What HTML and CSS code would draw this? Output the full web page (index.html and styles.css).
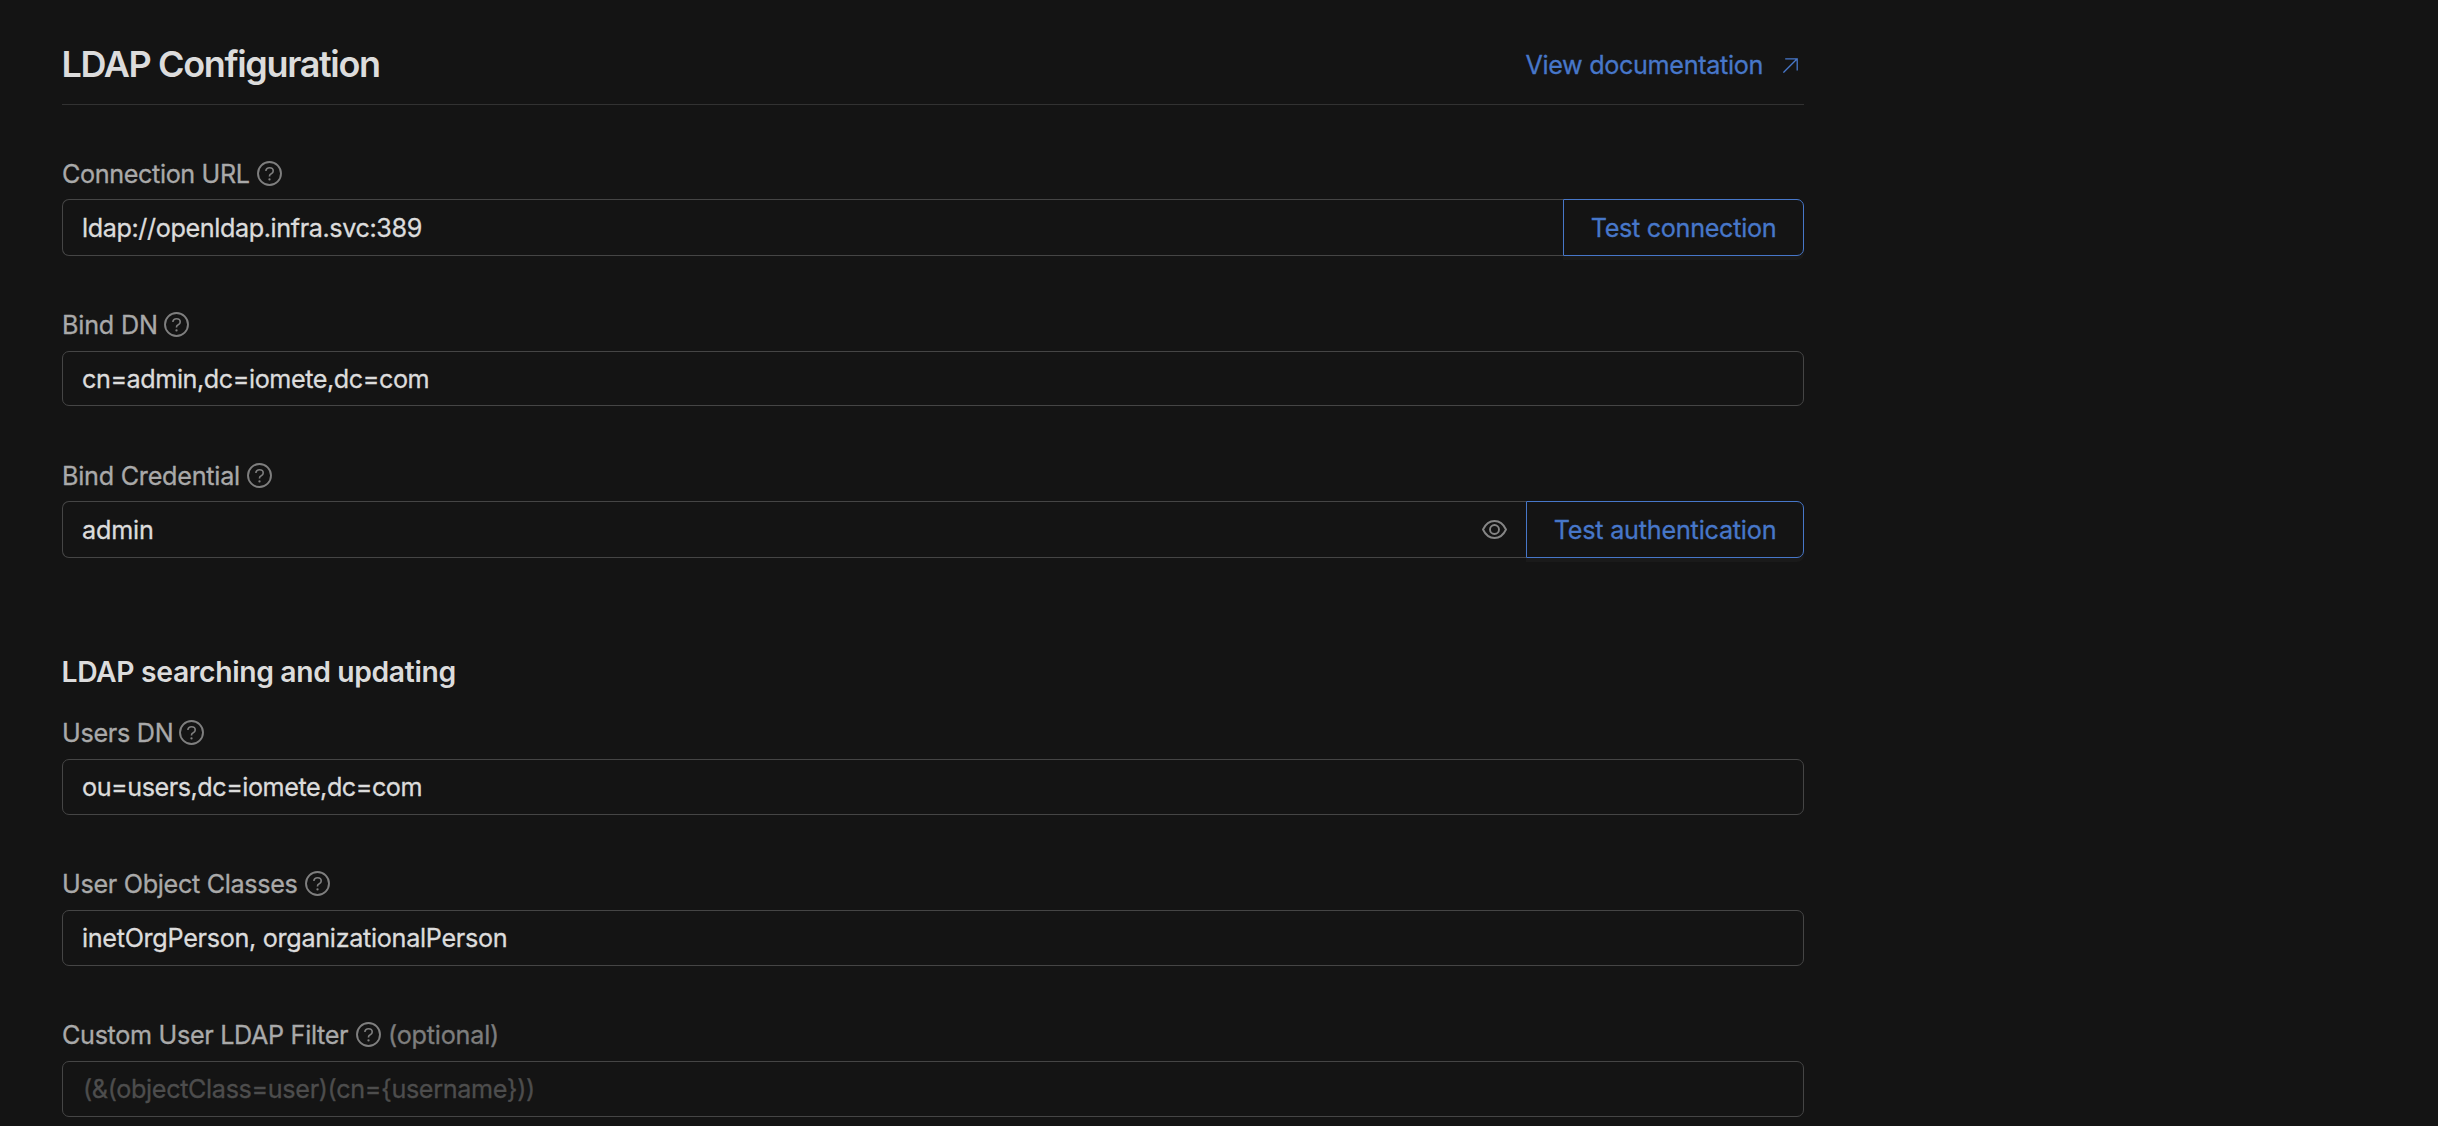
FILE: index.html
```html
<!DOCTYPE html>
<html lang="en">
<head>
<meta charset="utf-8">
<title>LDAP Configuration</title>
<link rel="stylesheet" href="styles.css">
</head>
<body>
<svg class="sprite" aria-hidden="true">
  <symbol id="help" viewBox="0 0 25 25">
    <circle cx="12.5" cy="12.5" r="11.5" fill="none" stroke="currentColor" stroke-width="1.9"/>
    <path d="M8.900 10.100C8.900 7.900 10.400 6.700 12.500 6.700s3.700 1.300 3.700 3.200c0 1.500-.9 2.300-2 2.900-1.200.6-1.700 1.100-1.700 2.100v.6" fill="none" stroke="currentColor" stroke-width="1.6"/>
    <circle cx="12.5" cy="18.4" r="1.15" fill="currentColor"/>
  </symbol>
</svg>
<main class="page">
  <header class="header">
    <h1 class="title">LDAP Configuration</h1>
    <a class="doc-link"><span>View documentation</span>
      <svg class="arrow" viewBox="0 0 15 15"><path d="M.4 14.6L14.2.8M2.2.8h12v11.8" fill="none" stroke="currentColor" stroke-width="1.3"/></svg>
    </a>
  </header>

  <section class="field field--action">
    <label class="label"><span class="t-url">Connection URL</span><svg class="help"><use href="#help"/></svg></label>
    <div class="group">
      <div class="input"><span class="v-url">ldap://openldap.infra.svc:389</span></div>
      <button class="button button--connection">Test connection</button>
    </div>
  </section>

  <section class="field field--compact">
    <label class="label"><span class="t-bind">Bind DN</span><svg class="help"><use href="#help"/></svg></label>
    <div class="input"><span class="v-bind">cn=admin,dc=iomete,dc=com</span></div>
  </section>

  <section class="field field--action">
    <label class="label"><span class="t-cred">Bind Credential</span><svg class="help"><use href="#help"/></svg></label>
    <div class="group">
      <div class="input"><span class="v-cred">admin</span>
        <svg class="eye" viewBox="0 0 25 19" fill="none" stroke="currentColor" stroke-width="1.9"><path d="M1 9.500C3.600 4 7.500 1 12.500 1s8.900 3 11.500 8.500C21.400 15 17.500 18 12.500 18S3.600 15 1 9.500z"/><circle cx="12.500" cy="9.500" r="4.500"/></svg>
      </div>
      <button class="button button--auth">Test authentication</button>
    </div>
  </section>

  <h2 class="subtitle">LDAP searching and updating</h2>

  <section class="field">
    <label class="label"><span class="t-users">Users DN</span><svg class="help"><use href="#help"/></svg></label>
    <div class="input"><span class="v-users">ou=users,dc=iomete,dc=com</span></div>
  </section>

  <section class="field">
    <label class="label"><span class="t-classes">User Object Classes</span><svg class="help"><use href="#help"/></svg></label>
    <div class="input"><span class="v-classes">inetOrgPerson, organizationalPerson</span></div>
  </section>

  <section class="field">
    <label class="label"><span class="t-filter">Custom User LDAP Filter</span><svg class="help"><use href="#help"/></svg><span class="optional">(optional)</span></label>
    <div class="input"><span class="placeholder">(&amp;(objectClass=user)(cn={username}))</span></div>
  </section>
</main>
</body>
</html>
```
FILE: styles.css
```css
* { box-sizing: border-box; }
html { background: #141414; overflow: hidden; }
body {
  margin: 0;
  height: 1126px;
  overflow: hidden;
  background: #141414;
  color: #dcdcdc;
  font: 400 25.2px/40px Inter, "Liberation Sans", sans-serif;
  -webkit-text-stroke: 0.3px currentColor;
  white-space: nowrap;
}
.sprite { display: none; }
.page { width: 1804px; padding: 24px 0 0 62px; }

.header {
  display: flex;
  justify-content: space-between;
  align-items: center;
  height: 81px;
  margin-bottom: 49px;
  border-bottom: 1px solid #323232;
}
.title, .subtitle { font-weight: 600; -webkit-text-stroke-width: 0; }
.title { margin: 0 0 0 -0.5px; font-size: 36px; letter-spacing: -1.37px; }
.doc-link {
  display: flex;
  align-items: center;
  padding: 2px 6px 0 0;
  color: #4777c9;
  letter-spacing: -0.34px;
}
.arrow { width: 15px; height: 15px; margin-left: 20px; }

.field { display: flex; flex-direction: column; gap: 6px; margin-bottom: 49px; }
.field--action { gap: 5px; }
.field--compact { margin-bottom: 50px; }
.label { display: flex; align-items: center; height: 40px; color: #a9a9a9; }
.help { width: 25px; height: 25px; margin-bottom: 1px; color: #7f7f7f; }
.optional { margin-left: 7px; color: #7d7d7d; letter-spacing: -0.22px; }

.input {
  display: flex;
  flex: 1;
  align-items: center;
  justify-content: space-between;
  min-height: 56px;
  padding: 0 19px;
  border: 1px solid #454545;
  border-radius: 7px;
}
.field--compact .input { min-height: 55px; }
.group { display: flex; height: 57px; }
.group .input { border-right: 0; border-radius: 7px 0 0 7px; }
.eye { width: 25px; height: 19px; color: #858585; }
.button {
  padding: 0;
  border: 1px solid #4777c9;
  border-radius: 0 7px 7px 0;
  background: #141414;
  box-shadow: 0 4px 0 #1a1a1a;
  color: #4777c9;
  font: inherit;
}
.button--connection { width: 241px; letter-spacing: -0.31px; }
.button--auth { width: 278px; letter-spacing: -0.22px; }
.placeholder { margin-left: 1px; color: #4d4d4d; letter-spacing: -0.355px; }

.subtitle { margin: 94px 0 21px -0.5px; font-size: 28.3px; line-height: 40px; letter-spacing: -0.35px; }

.t-url { width: 195px; letter-spacing: -0.38px; }
.t-bind { width: 102px; letter-spacing: -0.2px; }
.t-cred { width: 185px; letter-spacing: -0.25px; }
.t-users { width: 117px; letter-spacing: -0.3px; }
.t-classes { width: 243px; letter-spacing: -0.32px; }
.t-filter { width: 294px; letter-spacing: -0.33px; }
.v-url { letter-spacing: -0.4px; }
.v-bind { letter-spacing: -0.44px; }
.v-cred { letter-spacing: -0.2px; }
.v-users { letter-spacing: -0.475px; }
.v-classes { letter-spacing: -0.31px; }
```
